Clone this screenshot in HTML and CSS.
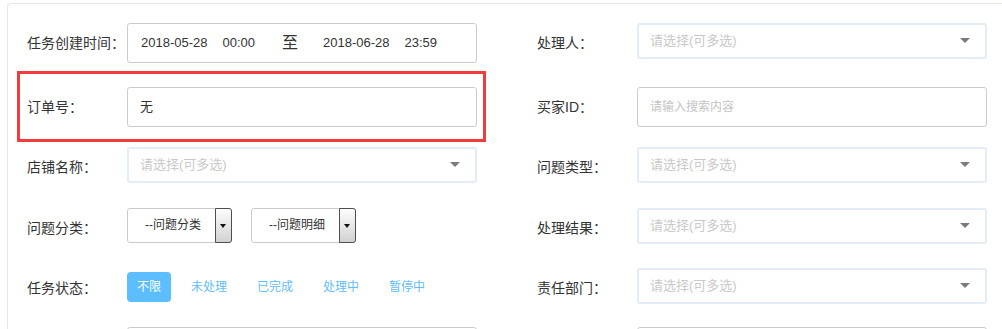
FILE: index.html
```html
<!DOCTYPE html>
<html lang="zh-CN">
<head>
  <meta charset="UTF-8">
  <meta name="viewport" content="width=device-width, initial-scale=1.0">
  <title>任务查询</title>
  <link rel="stylesheet" href="styles.css">
</head>
<body>
  <div class="panel">
    <div class="form">
      <div class="field">
        <span class="label">任务创建时间：</span>
        <div class="input range">
          <span class="range-part"><span>2018-05-28</span><span>00:00</span></span>
          <span class="range-sep">至</span>
          <span class="range-part"><span>2018-06-28</span><span>23:59</span></span>
        </div>
      </div>
      <div class="field">
        <span class="label">处理人：</span>
        <div class="multi">请选择(可多选)</div>
      </div>

      <div class="field marked">
        <span class="label">订单号：</span>
        <div class="input">无</div>
      </div>
      <div class="field">
        <span class="label">买家ID：</span>
        <div class="input placeholder">请输入搜索内容</div>
      </div>

      <div class="field">
        <span class="label">店铺名称：</span>
        <div class="multi">请选择(可多选)</div>
      </div>
      <div class="field">
        <span class="label">问题类型：</span>
        <div class="multi">请选择(可多选)</div>
      </div>

      <div class="field">
        <span class="label">问题分类：</span>
        <div class="mini"><span class="mini-text">--问题分类</span><span class="mini-btn"></span></div>
        <div class="mini"><span class="mini-text">--问题明细</span><span class="mini-btn"></span></div>
      </div>
      <div class="field">
        <span class="label">处理结果：</span>
        <div class="multi">请选择(可多选)</div>
      </div>

      <div class="field">
        <span class="label">任务状态：</span>
        <div class="status">
          <span class="status-item active">不限</span>
          <span class="status-item">未处理</span>
          <span class="status-item">已完成</span>
          <span class="status-item">处理中</span>
          <span class="status-item">暂停中</span>
        </div>
      </div>
      <div class="field">
        <span class="label">责任部门：</span>
        <div class="multi">请选择(可多选)</div>
      </div>

      <div class="field">
        <span class="label"></span>
        <div class="input"></div>
      </div>
      <div class="field">
        <span class="label"></span>
        <div class="input"></div>
      </div>
    </div>
  </div>
</body>
</html>
```

FILE: styles.css
```css
body { margin: 0; background: #fff; font-family: "Liberation Sans", "Noto Sans CJK SC", sans-serif; color: #333; overflow: hidden; }
.panel { margin: 3px 0 0 7px; border-top: 1px solid #e6e6f2; border-left: 1px solid #e6e6f2; border-top-left-radius: 4px; padding: 19px 0 0 19px; height: 400px; }
.form { display: grid; grid-template-columns: 510px 460px; grid-template-rows: 64px 60px 61px 60px 59px 40px; }
.field { display: flex; align-items: flex-start; }
.field.marked { position: relative; }
.field.marked::after { content: ''; position: absolute; left: -10px; top: -16px; width: 469px; height: 71px; border: 3px solid #f23c3c; box-sizing: border-box; }
.label { width: 100px; flex: none; line-height: 40px; font-size: 14px; color: #333; white-space: nowrap; }
.input { width: 350px; height: 40px; box-sizing: border-box; border: 1px solid #cbcbcb; border-radius: 3px; padding: 0 12px; font-size: 13px; line-height: 38px; color: #333; }
.input.placeholder { font-size: 12px; color: #c4c4c4; }
.range { display: flex; padding-left: 13px; }
.range-part { display: flex; gap: 15px; width: 153px; }
.range-sep { font-size: 16px; margin-right: 25px; }
.multi { position: relative; width: 350px; height: 36px; box-sizing: border-box; border: 2px solid #e4ecf6; border-radius: 3px; padding-left: 11px; font-size: 13px; line-height: 32px; color: #c9c9c9; }
.multi::after { content: ''; position: absolute; right: 15px; top: 13px; border-left: 5px solid transparent; border-right: 5px solid transparent; border-top: 5px solid #7b7b7b; }
.mini { display: flex; width: 105px; height: 35px; box-sizing: border-box; border: 1px solid #cbcbcb; border-radius: 3px; margin-right: 19px; }
.mini-text { flex: 1; padding-left: 17px; font-size: 12px; line-height: 33px; color: #333; white-space: nowrap; }
.mini-btn { position: relative; width: 17px; margin: -1px -1px -1px 0; box-sizing: border-box; border: 1px solid #4e4e4e; border-radius: 0 3px 3px 0; background: linear-gradient(#fdfdfd, #d2d2d2); }
.mini-btn::after { content: ''; position: absolute; left: 4px; top: 15px; border-left: 3px solid transparent; border-right: 3px solid transparent; border-top: 4px solid #111; }
.status { display: flex; gap: 10px; margin-top: 4px; }
.status-item { height: 30px; line-height: 30px; padding: 0 10px; font-size: 12px; color: #62bdfa; border-radius: 4px; white-space: nowrap; }
.status-item.active { background: #5cbdff; color: #fff; }
```
